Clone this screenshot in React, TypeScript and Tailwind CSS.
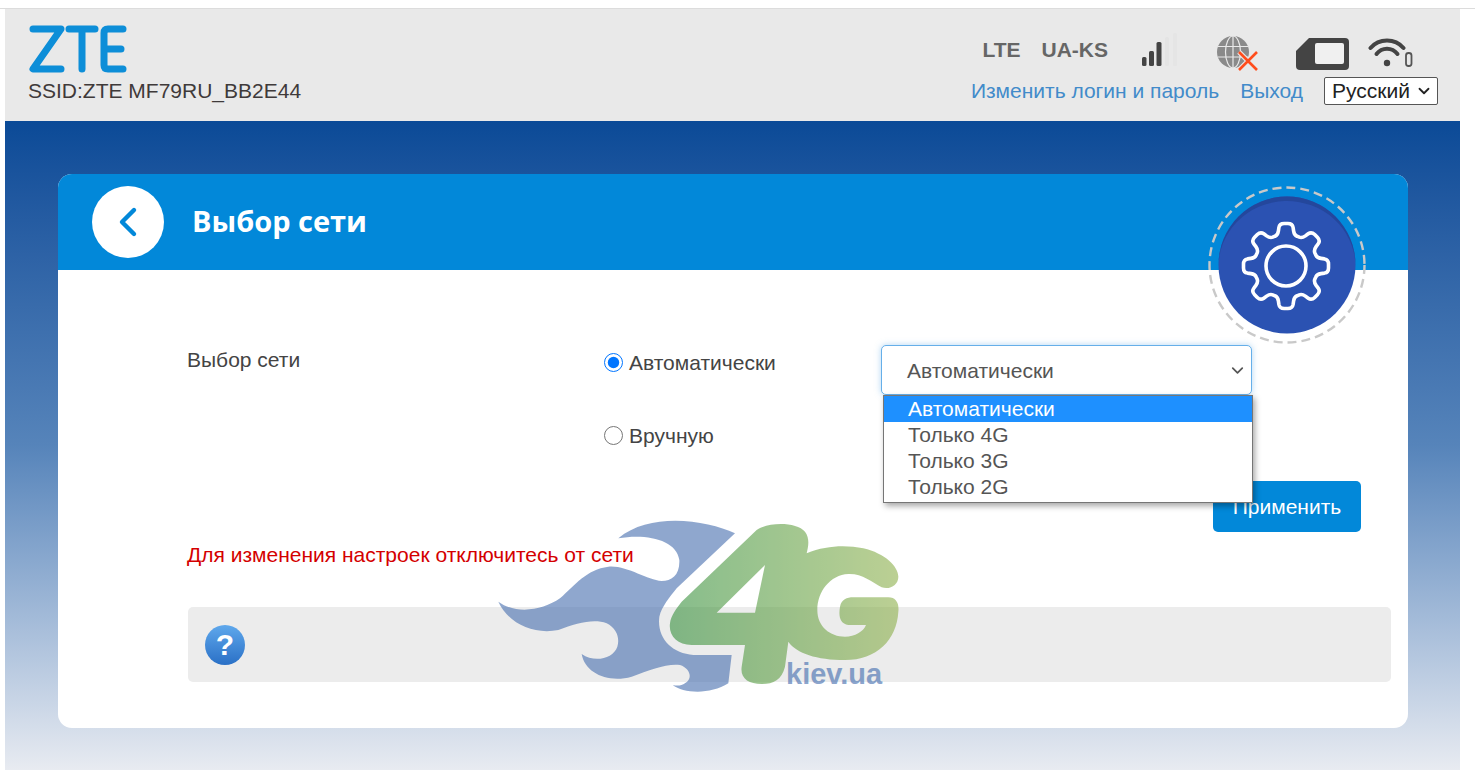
import { ChevronDown } from 'lucide-react'

const sans = 'font-["Liberation_Sans",Arial,sans-serif]'

function gearPath(cx: number, cy: number) {
  const pts: [number, number][] = []
  const rOut = 43
  const rIn = 32
  for (let i = 0; i < 8; i++) {
    const a = (i * Math.PI) / 4 - Math.PI / 2
    const at = (r: number, d: number): [number, number] => [cx + r * Math.cos(a + d), cy + r * Math.sin(a + d)]
    pts.push(at(rIn, -0.26), at(rOut, -0.15), at(rOut, 0.15), at(rIn, 0.26))
  }
  // round every corner so the teeth come out soft
  let d = ''
  pts.forEach((p, i) => {
    const prev = pts[(i + pts.length - 1) % pts.length]
    const next = pts[(i + 1) % pts.length]
    const lerp = (q: [number, number], t: number) => `${(p[0] + (q[0] - p[0]) * t).toFixed(1)} ${(p[1] + (q[1] - p[1]) * t).toFixed(1)}`
    d += `${i === 0 ? 'M' : 'L'}${lerp(prev, 0.35)} Q${p[0].toFixed(1)} ${p[1].toFixed(1)} ${lerp(next, 0.35)} `
  })
  return d + 'Z'
}

function ZteLogo() {
  return (
    <svg width="100" height="48" viewBox="0 0 100 48" fill="none" stroke="#0d8ed8" strokeWidth="7" strokeLinecap="round" strokeLinejoin="round">
      <path d="M5 4 H33 L5 44 H33" />
      <path d="M41 4 H67 M54 4 V44" />
      <path d="M95 4 H80 Q76 4 76 8 V40 Q76 44 80 44 H95 M76 24 H93" />
    </svg>
  )
}

function SignalIcon() {
  return (
    <svg width="38" height="38" viewBox="0 0 38 38">
      <rect x="1" y="24" width="4.5" height="9" rx="1.5" fill="#444" />
      <rect x="8" y="18" width="5" height="15" rx="1.5" fill="#444" />
      <rect x="15.5" y="9" width="5" height="24" rx="1.5" fill="#444" />
      <rect x="24" y="4" width="4" height="29" rx="1.5" fill="#e4e4e4" />
      <rect x="32" y="0" width="4" height="33" rx="1.5" fill="#e5e5e5" />
    </svg>
  )
}

function GlobeIcon() {
  return (
    <svg width="42" height="36" viewBox="0 0 42 36" fill="none">
      <circle cx="16" cy="16" r="16" fill="#8a8a8a" />
      <g stroke="#e9e9e9" strokeWidth="1.2">
        <ellipse cx="16" cy="16" rx="7.5" ry="16" />
        <path d="M16 0 V32 M1 10.5 H31 M1 21 H31" />
      </g>
      <path d="M22 16 L40 34 M40 16 L22 34" stroke="#e9e9e9" strokeWidth="5" />
      <path d="M22 16 L40 34 M40 16 L22 34" stroke="#ff4d1c" strokeWidth="2.6" />
    </svg>
  )
}

function SimIcon() {
  return (
    <svg width="53" height="32" viewBox="0 0 53 32">
      <path d="M13 0 H49 Q53 0 53 4 V28 Q53 32 49 32 H4 Q0 32 0 28 V13 Z" fill="#444" />
      <rect x="19" y="5" width="29" height="21" rx="2" fill="#f0f0f0" />
    </svg>
  )
}

function WifiIcon() {
  return (
    <svg width="45" height="32" viewBox="0 0 45 32" fill="none" stroke="#444" strokeLinecap="round">
      <path d="M2.5 11 C11 1 27 1 35.5 11" strokeWidth="4" />
      <path d="M8.5 17 C14 10 24 10 29.5 17" strokeWidth="4" />
      <circle cx="19" cy="26" r="3.2" fill="#444" stroke="none" />
      <rect x="38" y="16" width="5.5" height="13" rx="2.5" strokeWidth="1.8" stroke="#555" />
    </svg>
  )
}

function GearBadge() {
  return (
    <svg width="160" height="160" viewBox="0 0 160 160" fill="none">
      <circle cx="80" cy="80" r="77.5" stroke="#c9c9c9" strokeWidth="2.4" strokeDasharray="9 5" />
      <circle cx="80" cy="80" r="68.5" fill="#2b52b2" />
      <path d="M11.5 80 A68.5 68.5 0 0 1 148.5 80 A68.5 66 0 0 0 11.5 84 Z" fill="#24479c" />
      <path d={gearPath(79, 81)} stroke="#fff" strokeWidth="3.6" strokeLinejoin="round" />
      <circle cx="79" cy="81" r="20" stroke="#fff" strokeWidth="3.6" />
    </svg>
  )
}

function Watermark() {
  return (
    <div className="absolute left-[480px] top-[510px] w-[440px] h-[200px] opacity-60 pointer-events-none">
      <svg width="440" height="200" viewBox="0 0 1320 600">
        <defs>
          <linearGradient id="green" x1="0" x2="1" y1="0" y2="0">
            <stop offset="0" stopColor="#37913f" />
            <stop offset="1" stopColor="#8fb14d" />
          </linearGradient>
        </defs>
        <path
          fill="#466eaf"
          d="M765 70 C680 30 510 5 415 85 C500 70 590 90 598 150 C600 195 575 213 545 213 C500 210 440 165 385 170 C320 178 285 225 240 265 C190 300 110 315 55 275 C85 340 160 375 235 360 C290 340 340 325 380 340 C410 355 420 385 412 410 C400 445 345 460 305 432 C315 490 385 520 455 500 C510 480 560 460 600 465 C630 475 640 505 615 520 C605 528 590 528 578 525 C610 550 690 555 745 520 L755 435 L640 435 C575 430 530 385 538 320 C545 290 570 260 590 235 Z"
        />
        <path
          fill="url(#green)"
          fillRule="evenodd"
          d="M830 60 C865 35 950 35 975 65 C990 85 985 110 980 130 C1040 105 1100 105 1150 115 C1215 130 1255 170 1255 200 C1255 225 1230 240 1205 232 C1175 215 1145 190 1105 192 C1050 195 1012 245 1012 300 C1012 350 1050 380 1095 380 C1125 380 1150 365 1158 345 L1105 345 C1080 340 1075 320 1080 290 C1085 268 1100 262 1120 262 L1225 262 C1248 262 1258 280 1255 305 C1250 390 1190 450 1095 450 C1010 450 950 430 925 395 L915 470 C905 510 880 522 845 522 C805 522 780 505 785 470 L795 405 L635 405 C590 405 565 375 570 340 C573 315 590 295 605 275 Z M855 165 L710 308 L825 308 Z"
        />
      </svg>
      <span className={`absolute left-[306px] top-[150px] text-[29px] leading-none font-bold text-[#3f6aad] ${sans}`}>kiev.ua</span>
    </div>
  )
}

export default function App() {
  return (
    <div className={`relative w-[1475px] h-[770px] overflow-hidden bg-white text-[21px] text-[#444] ${sans}`}>
      <div className="h-[9px] border-b border-[#dcdcdc]" />
      <div className="ml-[5px] w-[1455px] h-[761px] flex flex-col">
        <header className="h-[112px] shrink-0 bg-[#e9e9e9] flex justify-between">
          <div className="pl-[23px] pt-[16px]">
            <ZteLogo />
            <div className="mt-[6px] leading-[23px] text-[#3f3a3a]">SSID:ZTE MF79RU_BB2E44</div>
          </div>
          <div className="pr-[22px] flex flex-col items-end">
            <div className="flex items-center h-[39px] mt-[21px] pr-[25px] text-[#666] font-bold">
              <span>LTE</span>
              <span className="ml-[21px]">UA-KS</span>
              <span className="ml-[33px] mt-[5px]"><SignalIcon /></span>
              <span className="ml-[38px] mt-[8px]"><GlobeIcon /></span>
              <span className="ml-[37px] mt-[8px]"><SimIcon /></span>
              <span className="ml-[19px] mt-[7px]"><WifiIcon /></span>
            </div>
            <div className="flex items-center mt-[6px]">
              <a className="text-[#428bca]">Изменить логин и пароль</a>
              <a className="ml-[21px] text-[#428bca]">Выход</a>
              <div className="ml-[21px] w-[114px] h-[28px] bg-white border border-[#555] rounded-[2px] flex items-center justify-between pl-[7px] pr-[4px] text-[#222]">
                <span>Русский</span>
                <ChevronDown size={18} strokeWidth={2.4} />
              </div>
            </div>
          </div>
        </header>

        <main className="flex-1 pt-[53px] px-[53px] bg-gradient-to-b from-[#0a4a97] via-[#5684ba] via-50% to-[#e8ebf1]">
          <div className="relative w-[1350px] h-[554px] bg-white rounded-[14px]">
            <div className="h-[96px] bg-[#0288d9] rounded-t-[14px] flex items-center pl-[34px]">
              <div className="w-[72px] h-[72px] rounded-full bg-white flex items-center justify-center">
                <svg width="22" height="32" viewBox="0 0 22 32" fill="none" stroke="#0288d9" strokeWidth="4.4" strokeLinecap="round" strokeLinejoin="round">
                  <path d="M17 4 L5 16 L17 28" />
                </svg>
              </div>
              <h1 className='ml-[28px] -mt-[3px] text-[29px] font-bold text-white font-["Open_Sans",sans-serif]'>Выбор сети</h1>
            </div>
            <div className="absolute left-[1149px] top-[11px]">
              <GearBadge />
            </div>

            <div className="pt-[75px] flex h-[211px]">
              <div className="w-[546px] pl-[129px] pt-[3px] leading-[23px]">Выбор сети</div>
              <div className="w-[277px] flex flex-col gap-[50px] pt-[6px]">
                <label className="flex items-center gap-[6px] h-[23px]">
                  <input type="radio" name="mode" defaultChecked className="w-[19px] h-[19px] m-0" />
                  <span>Автоматически</span>
                </label>
                <label className="flex items-center gap-[6px] h-[23px]">
                  <input type="radio" name="mode" className="w-[19px] h-[19px] m-0" />
                  <span>Вручную</span>
                </label>
              </div>
              <div className="relative w-[371px] h-[50px] border border-[#66afe9] rounded-[5px] shadow-[0_0_6px_rgba(102,175,233,0.5)] flex items-center justify-between pl-[25px] pr-[4px] pt-[1px] text-[#555] bg-white">
                <span>Автоматически</span>
                <ChevronDown size={19} strokeWidth={2.2} />
              </div>
            </div>

            <div className="flex justify-end pr-[47px]">
              <button className="w-[148px] h-[51px] bg-[#0288d9] rounded-[5px] text-white">Применить</button>
            </div>
            <div className="mt-[11px] ml-[129px] leading-[23px] text-[#d40000]">Для изменения настроек отключитесь от сети</div>
            <div className="mt-[41px] ml-[130px] w-[1203px] h-[75px] bg-[#ececec] rounded-[5px] flex items-center pl-[17px]">
              <div className="w-[40px] h-[40px] rounded-full bg-gradient-to-b from-[#5fa8ec] to-[#2a70c6] flex items-center justify-center text-[30px] font-bold text-white">?</div>
            </div>

            <ul className="absolute left-[825px] top-[221px] w-[370px] h-[108px] bg-white border border-[#767676] shadow-[2px_3px_6px_rgba(0,0,0,0.35)] text-[#555] leading-[26.3px] pl-0">
              <li className="pl-[24px] bg-[#1e90ff] text-white leading-[26px] h-[26.3px]">Автоматически</li>
              <li className="pl-[24px] -mt-[0.5px]">Только 4G</li>
              <li className="pl-[24px] -mt-[0.5px]">Только 3G</li>
              <li className="pl-[24px]">Только 2G</li>
            </ul>
          </div>
        </main>
      </div>
      <Watermark />
    </div>
  )
}
